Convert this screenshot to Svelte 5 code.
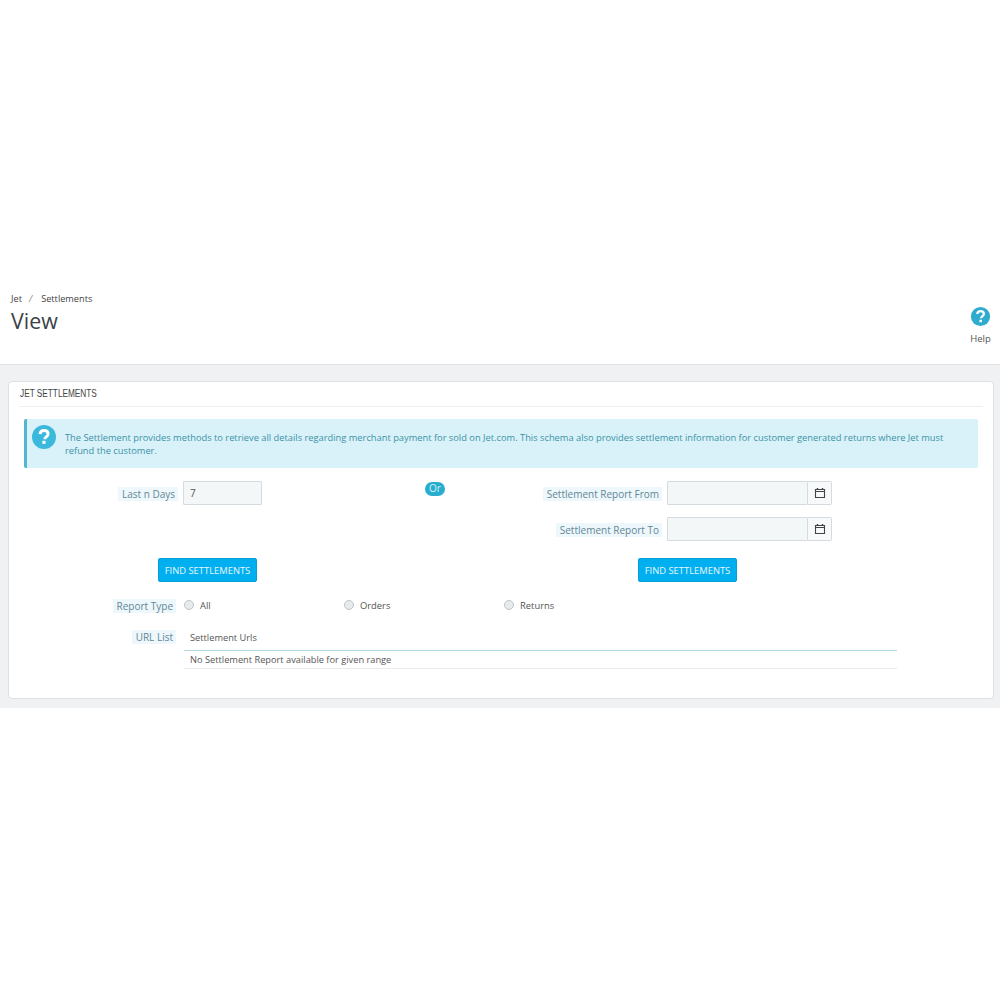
<script lang="ts">
  const reportTypes = [
    { label: 'All', width: 160 },
    { label: 'Orders', width: 160 },
    { label: 'Returns', width: 100 }
  ];
</script>

<div class="page">
  <header class="page-head">
    <div class="page-head__left">
      <div class="crumbs"><span>Jet</span><i>/</i><span>Settlements</span></div>
      <h1 class="page-title">View</h1>
    </div>
    <div class="help">
      <svg class="help__icon" viewBox="0 0 24 24" aria-hidden="true">
        <circle cx="12" cy="12" r="10" fill="#2eacce" />
        <path d="M8.6 9.4c.2-2 1.6-3.1 3.5-3.1 2 0 3.4 1.2 3.4 2.9 0 1.4-.8 2.1-1.7 2.7-.8.5-1.1.9-1.1 1.7v.3" fill="none" stroke="#fff" stroke-width="2.4" />
        <rect x="10.9" y="15.4" width="2.6" height="2.6" fill="#fff" />
      </svg>
      <span>Help</span>
    </div>
  </header>

  <main class="content">
    <section class="panel">
      <h2 class="panel__title"><span>JET SETTLEMENTS</span></h2>

      <div class="alert">
        <svg class="alert__icon" viewBox="0 0 24 24" aria-hidden="true">
          <circle cx="12" cy="12" r="12" fill="#3bb9dc" />
          <path d="M8 9.2c.2-2.4 1.8-3.7 4.1-3.7 2.4 0 4 1.4 4 3.4 0 1.6-.9 2.4-2 3.1-.9.6-1.2 1-1.2 1.9v.4" fill="none" stroke="#fff" stroke-width="2.9" />
          <rect x="10.4" y="15.8" width="3.1" height="3" fill="#fff" />
        </svg>
        <p>The Settlement provides methods to retrieve all details regarding merchant payment for sold on Jet.com. This schema also provides settlement information for customer generated returns where Jet must refund the customer.</p>
      </div>

      <div class="finders">
        <div class="finder finder--days">
          <div class="field">
            <span class="label">Last n Days</span>
            <div class="input input--days">7</div>
          </div>
          <button class="btn" type="button">FIND SETTLEMENTS</button>
        </div>

        <span class="or">Or</span>

        <div class="finder finder--dates">
          <div class="field">
            <span class="label">Settlement Report From</span>
            <div class="date">
              <div class="input"></div>
              <div class="date__addon">
                <svg viewBox="0 0 12 12" aria-hidden="true"><path d="M1.5 2.5h9v8h-9zM1.5 4.5h9" fill="none" stroke="#444" stroke-width="1.1" /><path d="M3.5 1v2M8.5 1v2" stroke="#444" stroke-width="1.4" /></svg>
              </div>
            </div>
          </div>
          <div class="field">
            <span class="label">Settlement Report To</span>
            <div class="date">
              <div class="input"></div>
              <div class="date__addon">
                <svg viewBox="0 0 12 12" aria-hidden="true"><path d="M1.5 2.5h9v8h-9zM1.5 4.5h9" fill="none" stroke="#444" stroke-width="1.1" /><path d="M3.5 1v2M8.5 1v2" stroke="#444" stroke-width="1.4" /></svg>
              </div>
            </div>
          </div>
          <button class="btn" type="button">FIND SETTLEMENTS</button>
        </div>
      </div>

      <div class="row row--type">
        <span class="label">Report Type</span>
        <div class="radios">
          {#each reportTypes as type}
            <div class="radio" style="width: {type.width}px">
              <span class="radio__dot"></span>
              <span>{type.label}</span>
            </div>
          {/each}
        </div>
      </div>

      <div class="row row--urls">
        <span class="label">URL List</span>
        <div class="table">
          <div class="table__head">Settlement Urls</div>
          <div class="table__cell">No Settlement Report available for given range</div>
        </div>
      </div>
    </section>
  </main>
</div>

<style>
  :global(body) {
    background: #fff;
    font-family: "Open Sans", "Liberation Sans", sans-serif;
  }

  .page {
    padding-top: 288px;
    font-size: 10px;
    color: #555;
  }

  .page-head {
    display: flex;
    justify-content: space-between;
    height: 77px;
    padding: 0 8px 0 11px;
    box-sizing: border-box;
    border-bottom: 1px solid #dfe3e5;
  }

  .crumbs {
    display: flex;
    gap: 7px;
    padding-top: 4px;
    font-size: 9.2px;
    line-height: 13px;
    color: #444;
  }

  .crumbs i {
    margin-right: 2px;
    color: #888;
  }

  .page-title {
    margin: 1px 0 0;
    font-size: 21.4px;
    font-weight: 400;
    line-height: 30px;
    color: #3c4145;
  }

  .help {
    display: flex;
    flex-direction: column;
    align-items: center;
    padding-top: 17px;
    font-size: 9.5px;
    line-height: 14px;
    color: #555;
  }

  .help__icon {
    width: 23px;
    height: 23px;
    margin-bottom: 4px;
  }

  .content {
    background: #eff1f2;
    padding: 16px 6px 9px 8px;
  }

  .panel {
    background: #fff;
    border: 1px solid #dde1e3;
    border-radius: 4px;
    height: 318px;
    box-sizing: border-box;
    padding: 0 15px;
  }

  .panel__title {
    margin: 0 -5px;
    height: 24px;
    padding-left: 1px;
    border-bottom: 1px solid #eef0f1;
    font-family: "Liberation Sans", sans-serif;
    font-size: 11px;
    font-weight: 400;
    line-height: 23px;
    color: #444;
  }

  /* no condensed family installed, squeeze the regular one */
  .panel__title span {
    display: inline-block;
    transform: scaleX(0.75);
    transform-origin: left center;
  }

  .alert {
    display: flex;
    gap: 9px;
    margin-top: 12px;
    height: 49px;
    box-sizing: border-box;
    padding: 6px 14px 0 5px;
    background: #d9f1f8;
    border-left: 3px solid #4fb6cf;
    border-radius: 2px;
    font-size: 9.3px;
    line-height: 13px;
    color: #3c93a8;
  }

  .alert p {
    margin: 6px 0 0;
  }

  .alert__icon {
    flex: none;
    width: 24px;
    height: 24px;
  }

  .finders {
    display: flex;
    margin-top: 13px;
    height: 101px;
  }

  .finder {
    display: flex;
    flex-direction: column;
    gap: 12px;
  }

  .finder--days {
    width: 401px;
  }

  .finder--dates {
    width: 387px;
  }

  .field {
    display: flex;
    align-items: center;
    gap: 5px;
    height: 24px;
  }

  .finder--days .label {
    margin-left: 94px;
  }

  .finder--dates .field {
    justify-content: flex-end;
  }

  .label {
    padding: 0 3px 0 4px;
    background: #eef7fb;
    color: #5f8796;
    line-height: 14px;
    white-space: nowrap;
  }

  .field .label {
    margin-top: 1px;
  }

  .input {
    flex: 1;
    height: 24px;
    box-sizing: border-box;
    padding: 0 6px;
    border: 1px solid #d5dcdf;
    background: #f3f7f8;
    border-radius: 1px;
    line-height: 22px;
    color: #555;
  }

  .input--days {
    flex: none;
    width: 79px;
  }

  .date {
    display: flex;
    width: 165px;
  }

  .date__addon {
    display: flex;
    align-items: center;
    justify-content: center;
    width: 24px;
    height: 24px;
    box-sizing: border-box;
    border: 1px solid #d5dcdf;
    border-left: 0;
    background: #f7f9fa;
    border-radius: 0 2px 2px 0;
  }

  .date__addon svg {
    width: 12px;
    height: 12px;
  }

  .btn {
    width: 99px;
    height: 24px;
    margin-top: auto;
    padding: 0;
    border: 1px solid #0c9fd6;
    border-radius: 2px;
    background: #00aff0;
    color: #e8f7fd;
    font: inherit;
    font-size: 9.4px;
  }

  .finder--days .btn {
    margin-left: 134px;
  }

  .finder--dates .btn {
    margin-left: 193px;
  }

  .or {
    flex: none;
    width: 20px;
    height: 14px;
    margin-top: 1px;
    border-radius: 8px;
    background: #27aecf;
    color: #d5eff6;
    text-align: center;
    line-height: 13px;
  }

  .row {
    display: grid;
    grid-template-columns: 152px 1fr;
    column-gap: 8px;
  }

  .row .label {
    justify-self: end;
    height: 14px;
  }

  .row--type {
    margin-top: 17px;
    align-items: center;
    height: 14px;
  }

  .radios {
    display: flex;
    font-size: 9.4px;
  }

  .radio {
    display: flex;
    align-items: center;
    gap: 6px;
    margin-top: -2px;
  }

  .radio__dot {
    width: 10px;
    height: 10px;
    box-sizing: border-box;
    border-radius: 50%;
    border: 1px solid #bfc5c8;
    background: #e8eaeb;
  }

  .row--urls {
    margin-top: 17px;
  }

  .table {
    width: 713px;
    font-size: 9.25px;
    color: #555;
  }

  .table__head {
    height: 20px;
    padding: 0 6px;
    border-bottom: 1px solid #b5dbe2;
    line-height: 15px;
  }

  .table__cell {
    height: 17px;
    padding: 0 6px;
    border-bottom: 1px solid #e9ecee;
    line-height: 17px;
  }
</style>
